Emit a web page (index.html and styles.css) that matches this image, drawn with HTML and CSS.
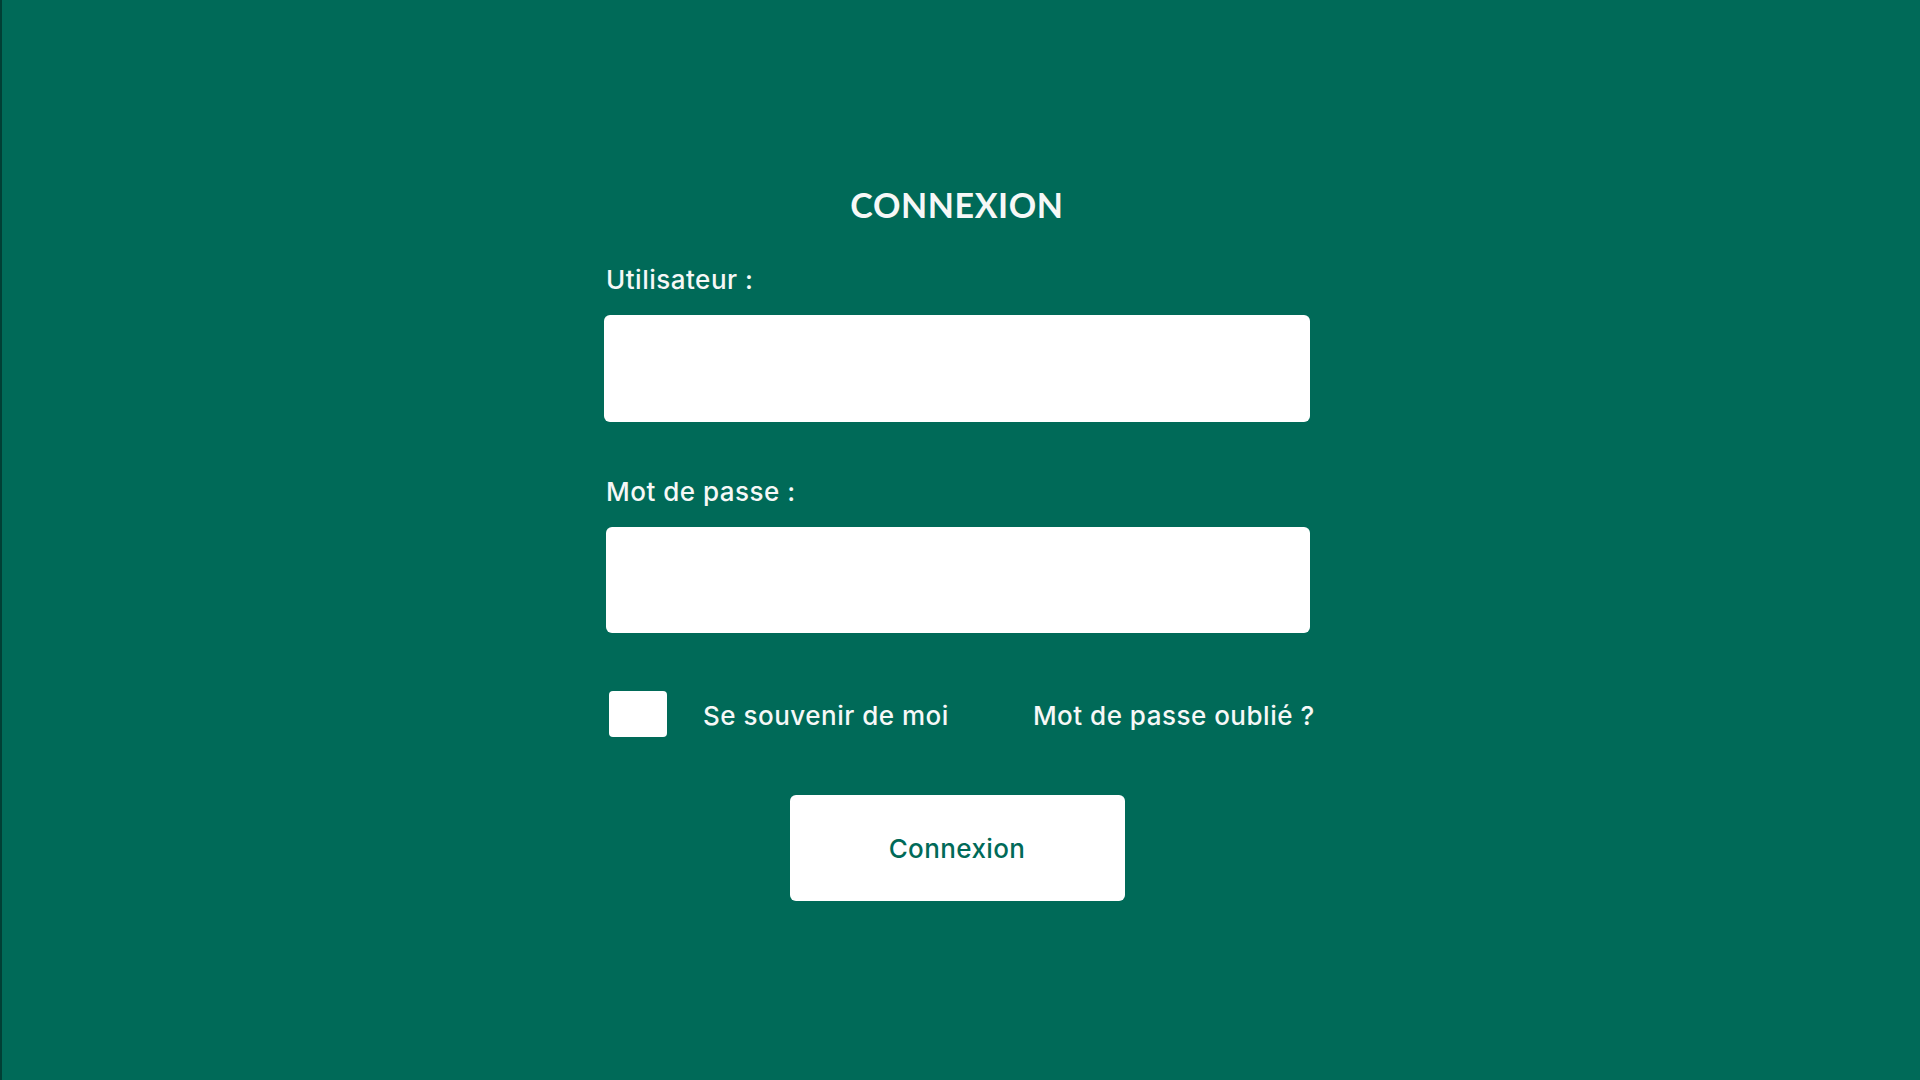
FILE: index.html
```html
<!DOCTYPE html>
<html lang="fr">
<head>
<meta charset="utf-8">
<title>Connexion</title>
<link rel="stylesheet" href="styles.css">
</head>
<body>
<main class="page">
  <form class="login">
    <h1 class="title">CONNEXION</h1>
    <label class="label label-user" for="user">Utilisateur :</label>
    <input class="field field-user" id="user" type="text">
    <label class="label label-pass" for="pass">Mot de passe :</label>
    <input class="field field-pass" id="pass" type="password">
    <div class="options">
      <span class="check"></span>
      <span class="remember">Se souvenir de moi</span>
      <a class="forgot">Mot de passe oublié ?</a>
    </div>
    <button class="submit" type="button">Connexion</button>
  </form>
</main>
</body>
</html>
```

FILE: styles.css
```css
html, body {
  margin: 0;
  padding: 0;
}
body {
  background: #006a58;
  border-left: 2px solid #013f35;
  min-height: 100vh;
  box-sizing: border-box;
  font-family: Inter, "Open Sans", sans-serif;
  color: #f6f8f7;
}
.page {
  display: flex;
  justify-content: center;
  padding-right: 8px;
  padding-top: 185px;
}
.login {
  width: 706px;
  display: flex;
  flex-direction: column;
}
.title {
  margin: 0;
  font-family: Lato, "Open Sans", sans-serif;
  font-size: 34px;
  line-height: 40px;
  font-weight: 700;
  text-align: center;
  letter-spacing: 0.6px;
}
.label {
  font-size: 26px;
  line-height: 32px;
  font-weight: 500;
  letter-spacing: 0.5px;
}
.label-user {
  margin-top: 39px;
  margin-left: 2px;
}
.label-pass {
  margin-top: 54px;
  margin-left: 2px;
}
.field {
  margin: 19px 0 0;
  height: 107px;
  border: none;
  border-radius: 6px;
  background: #ffffff;
  box-sizing: border-box;
  outline: none;
}
.field-pass {
  height: 106px;
  margin-left: 2px;
}
.options {
  margin-top: 58px;
  display: flex;
  align-items: center;
  height: 46px;
  font-size: 26px;
  line-height: 32px;
  font-weight: 500;
  letter-spacing: 0.5px;
  white-space: nowrap;
}
.options span, .options a {
  position: relative;
  top: 2px;
}
.check.check {
  top: 0;
  width: 58px;
  height: 46px;
  margin-left: 5px;
  background: #ffffff;
  border-radius: 4px;
  flex: none;
}
.remember {
  margin-left: 36px;
}
.forgot {
  margin-left: 84px;
  color: #f6f8f7;
}
.submit {
  align-self: center;
  margin-top: 58px;
  width: 335px;
  height: 106px;
  border: none;
  border-radius: 6px;
  background: #ffffff;
  color: #006a58;
  font-family: Inter, "Open Sans", sans-serif;
  font-size: 26px;
  font-weight: 500;
  letter-spacing: 0.4px;
  padding: 0;
}
```
